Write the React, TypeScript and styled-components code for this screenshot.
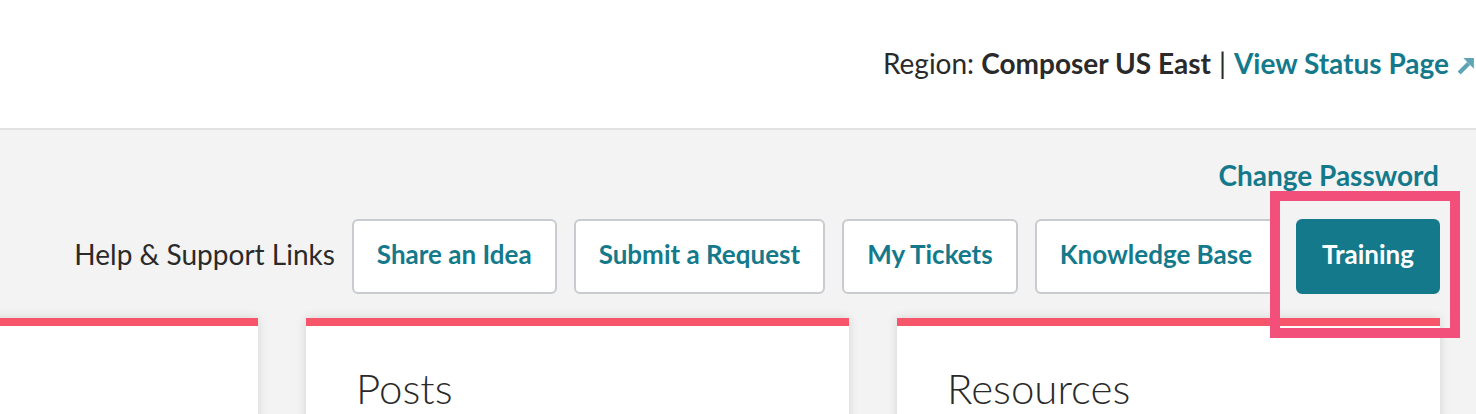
import styled, { createGlobalStyle } from 'styled-components';

const colors = {
  teal: '#147a8b',
  tealLight: '#5ea3b6',
  text: '#2a2a2a',
  pageGrey: '#f3f3f3',
  line: '#e2e2e2',
  btnBorder: '#c8cbcf',
  cardTop: '#f7566a',
  highlight: '#f24f7b',
};

const GlobalStyle = createGlobalStyle`
  html, body {
    margin: 0;
    padding: 0;
    background: #fff;
    font-family: Lato, 'Open Sans', 'Liberation Sans', sans-serif;
    color: ${colors.text};
    overflow: hidden;
  }
`;

const Page = styled.div`
  width: 1476px;
  min-height: 414px;
`;

const TopBar = styled.header`
  height: 128px;
  display: flex;
  align-items: center;
  justify-content: flex-end;
  background: #fff;
  border-bottom: 2px solid ${colors.line};
  font-size: 28px;
  line-height: 1.2;
`;

const Strong = styled.strong`
  font-weight: 700;
`;

const Divider = styled.span`
  margin: 0 8px;
`;

const StatusLink = styled.a`
  display: inline-flex;
  align-items: center;
  color: ${colors.teal};
  font-weight: 700;
  text-decoration: none;
`;

const ArrowIcon = styled.svg`
  width: 19px;
  height: 19px;
  margin-left: 8px;
  margin-top: 3px;
  flex-shrink: 0;
`;

const Main = styled.main`
  background: ${colors.pageGrey};
  min-height: 284px;
`;

const AccountRow = styled.div`
  display: flex;
  justify-content: flex-end;
  padding: 29px 37px 0 0;
`;

const TextLink = styled.a`
  color: ${colors.teal};
  font-size: 28px;
  line-height: 1.2;
  font-weight: 700;
  text-decoration: none;
`;

const SupportRow = styled.div`
  display: flex;
  align-items: center;
  justify-content: flex-end;
  gap: 17px;
  padding: 26px 36px 0 0;
`;

const SupportLabel = styled.span`
  font-size: 28px;
  line-height: 1.2;
  margin-bottom: 2px;
`;

const SupportButton = styled.a<{ primary?: boolean }>`
  position: relative;
  display: flex;
  align-items: center;
  box-sizing: border-box;
  height: 75px;
  padding: 0 ${({ primary }) => (primary ? '24px' : '23px')} 4px;
  margin-left: ${({ primary }) => (primary ? '2px' : '0')};
  border-radius: 6px;
  border: 2px solid ${({ primary }) => (primary ? colors.teal : colors.btnBorder)};
  background: ${({ primary }) => (primary ? colors.teal : '#fff')};
  color: ${({ primary }) => (primary ? '#fff' : colors.teal)};
  font-size: 26px;
  line-height: 1.2;
  font-weight: 700;
  text-decoration: none;
`;

// annotation frame drawn over the highlighted button
const Highlight = styled.span`
  position: absolute;
  left: -28px;
  right: -22px;
  top: -30px;
  bottom: -46px;
  border: 10px solid ${colors.highlight};
  pointer-events: none;
  z-index: 2;
`;

const CardsRow = styled.div`
  display: flex;
  justify-content: flex-end;
  gap: 48px;
  overflow: hidden;
  margin-top: 12px;
  padding: 12px 36px 20px 0;
`;

const Card = styled.section`
  flex: 0 0 543px;
  min-height: 140px;
  background: #fff;
  border-top: 8px solid ${colors.cardTop};
  box-shadow: 0 0 10px rgba(0, 0, 0, 0.13);
  padding: 37px 50px;
  box-sizing: border-box;
`;

const CardTitle = styled.h2`
  margin: 0;
  font-size: 42px;
  line-height: 1.2;
  font-weight: 300;
  color: ${colors.text};
`;

const supportLinks = ['Share an Idea', 'Submit a Request', 'My Tickets', 'Knowledge Base'];

const App = () => {
  return (
    <Page>
      <GlobalStyle />
      <TopBar>
        <span>
          Region: <Strong>Composer US East</Strong>
        </span>
        <Divider>|</Divider>
        <StatusLink href="#">
          View Status Page
          <ArrowIcon viewBox="0 0 18 18">
            <line x1="2" y1="16" x2="11" y2="7" stroke={colors.tealLight} strokeWidth="4" />
            <polygon points="6,2 16,2 16,12" fill={colors.tealLight} />
          </ArrowIcon>
        </StatusLink>
      </TopBar>

      <Main>
        <AccountRow>
          <TextLink href="#">Change Password</TextLink>
        </AccountRow>

        <SupportRow>
          <SupportLabel>Help &amp; Support Links</SupportLabel>
          {supportLinks.map((label) => (
            <SupportButton key={label} href="#">
              {label}
            </SupportButton>
          ))}
          <SupportButton href="#" primary>
            Training
            <Highlight />
          </SupportButton>
        </SupportRow>

        <CardsRow>
          <Card />
          <Card>
            <CardTitle>Posts</CardTitle>
          </Card>
          <Card>
            <CardTitle>Resources</CardTitle>
          </Card>
        </CardsRow>
      </Main>
    </Page>
  );
};

export default App;
